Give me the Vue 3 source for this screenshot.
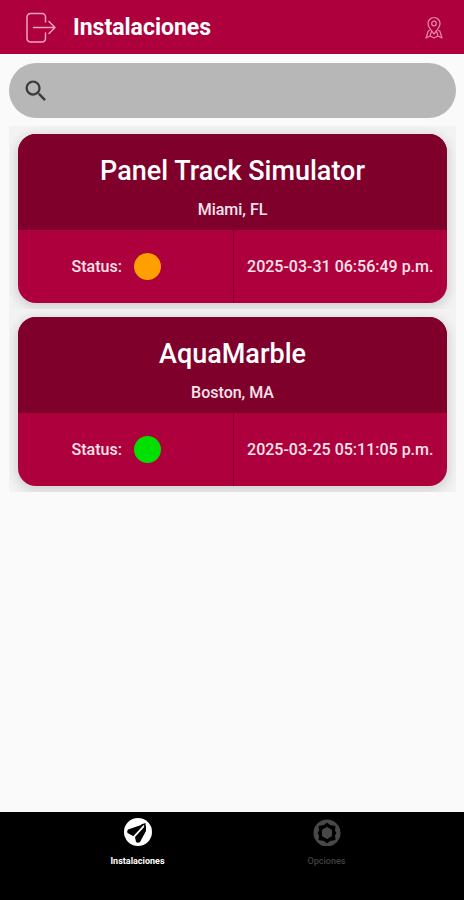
<script setup>
import { ref, computed } from 'vue'

const query = ref('')
const sites = [
  { name: 'Panel Track Simulator', place: 'Miami, FL', state: 'warning', updated: '2025-03-31 06:56:49 p.m.' },
  { name: 'AquaMarble', place: 'Boston, MA', state: 'online', updated: '2025-03-25 05:11:05 p.m.' },
]
const visibleSites = computed(() => {
  const q = query.value.trim().toLowerCase()
  return sites.filter((s) => (s.name + ' ' + s.place).toLowerCase().includes(q))
})
</script>

<template>
  <div class="screen">
    <header class="topbar">
      <button class="icon-button" type="button" aria-label="Salir">
        <svg width="32" height="32" viewBox="0 0 32 32" fill="none" stroke="#f0a3bd" stroke-width="1.5" stroke-linecap="round" stroke-linejoin="round">
          <path d="M20.500 10V5a3.500 3.500 0 0 0-3.500-3.500H5.500A3.500 3.500 0 0 0 2 5v21.500A3.500 3.500 0 0 0 5.500 30H17a3.500 3.500 0 0 0 3.500-3.500V21" />
          <path d="M8.500 15.500H30M24 9.500l6 6-6 6" />
        </svg>
      </button>
      <h1 class="heading">Instalaciones</h1>
      <button class="icon-button" type="button" aria-label="Mapa">
        <svg width="20" height="24" viewBox="0 0 20 24" fill="none" stroke="#e58aaa" stroke-width="1.200" stroke-linecap="round" stroke-linejoin="round">
          <path d="M10 18C7.500 14.500 4 11.500 4 7.500a6 6 0 0 1 12 0c0 4-3.500 7-6 10.500z" />
          <circle cx="10" cy="7.500" r="2.300" />
          <path d="M5.500 14.500 4.200 15 2 22l4-2 4 2 4-2 4 2-2.200-7-1.300-.5M6 20l1.500-4.500M14 20l-1.500-4.500" />
        </svg>
      </button>
    </header>

    <main class="content">
      <label class="search">
        <svg width="28" height="28" viewBox="0 0 24 24" fill="#3c3c3c" aria-hidden="true">
          <path d="M15.500 14h-.79l-.28-.27A6.471 6.471 0 0 0 16 9.500 6.500 6.500 0 1 0 9.500 16c1.610 0 3.090-.59 4.230-1.570l.27.28v.79l5 4.990L20.490 19l-4.990-5zm-6 0C7.010 14 5 11.990 5 9.500S7.010 5 9.500 5 14 7.010 14 9.500 11.990 14 9.500 14z" />
        </svg>
        <input v-model="query" class="search-input" type="search" aria-label="Buscar" />
      </label>

      <ul class="sites">
        <li v-for="site in visibleSites" :key="site.name" class="site">
          <article class="card">
            <div class="card-head">
              <h2 class="name">{{ site.name }}</h2>
              <p class="place">{{ site.place }}</p>
            </div>
            <div class="card-foot">
              <div class="cell status">
                <span>Status:</span>
                <span class="dot" :class="site.state"></span>
              </div>
              <time class="cell updated">{{ site.updated }}</time>
            </div>
          </article>
        </li>
      </ul>
    </main>

    <nav class="tabs">
      <a class="tab active" href="#instalaciones">
        <svg width="28" height="28" viewBox="0 0 28 28" aria-hidden="true">
          <circle cx="14" cy="14" r="14" fill="#fff" />
          <path d="M20 6 4 11.500Q2.500 13 3.500 15l6.500 3.500L21 7z" fill="#000" />
          <path d="M22 7 11 19l1 5q2 1.500 4 0L22 13z" fill="#000" />
          <path d="m17 6.500 4.500-1.500v5z" fill="#000" />
          <path d="M20 7.500 9.500 19" stroke="#fff" stroke-width="1.200" />
        </svg>
        <span>Instalaciones</span>
      </a>
      <a class="tab" href="#opciones">
        <svg width="28" height="28" viewBox="0 0 28 28" aria-hidden="true">
          <circle cx="14" cy="15" r="13.500" fill="#484848" />
          <path d="m14 4.500 3 2.500 5.500 1-.5 4.500 1.500 2.500-1.500 2.500.5 4.500-5.500 1-3 2.500-3-2.500-5.500-1 .5-4.500L4.500 15 6 12.500 5.500 8l5.500-1z" fill="#000" />
          <path d="m14 9.500 4.500 2.500v6L14 20.500 9.500 18v-6z" fill="#484848" stroke="#484848" stroke-linejoin="round" />
        </svg>
        <span>Opciones</span>
      </a>
    </nav>
  </div>
</template>

<style>
body {
  margin: 0;
  background: #fafafa;
}
</style>

<style scoped>
.screen {
  display: flex;
  flex-direction: column;
  min-height: 100vh;
  font-family: Roboto, sans-serif;
  color: #fbe3eb;
}
.topbar {
  display: flex;
  align-items: center;
  height: 54px;
  padding: 1px 20px 0 25px;
  box-sizing: border-box;
  background: #ad003c;
}
.icon-button {
  display: flex;
  padding: 0;
  border: 0;
  background: none;
  cursor: pointer;
}
.heading {
  flex: 1;
  margin: 0 0 0 16px;
  font-size: 23px;
  line-height: 28px;
  font-weight: 700;
  color: #fff;
}
.content {
  flex: 1;
  padding: 9px 8px 0 9px;
}
.search {
  display: flex;
  align-items: center;
  gap: 12px;
  height: 55px;
  padding: 0 24px 0 13px;
  box-sizing: border-box;
  border-radius: 28px;
  background: #b7b7b7;
}
.search-input {
  flex: 1;
  min-width: 0;
  padding: 0;
  border: 0;
  outline: 0;
  background: none;
  color: #3c3c3c;
  font: 400 16px/24px Roboto, sans-serif;
}
.sites {
  margin: 8px 0 0;
  padding: 0;
  list-style: none;
}
.site {
  padding: 8px 9px 6px;
  overflow: hidden;
  background: #f3f3f3;
}
.card {
  overflow: hidden;
  border-radius: 18px;
  background: #ad003c;
  box-shadow: 0 3px 12px 2px rgba(0, 0, 0, 0.14);
}
.card-head {
  padding: 20px 16px 10px;
  background: #7e002b;
  text-align: center;
}
.name {
  margin: 0;
  font-size: 27px;
  line-height: 34px;
  font-weight: 500;
  color: #fff;
}
.place {
  margin: 12px 0 0;
  font-size: 16px;
  line-height: 20px;
  font-weight: 500;
}
.card-foot {
  display: grid;
  grid-template-columns: 1fr 1fr;
  height: 73px;
  font-size: 16px;
  line-height: 20px;
  font-weight: 500;
}
.cell {
  display: flex;
  align-items: center;
  justify-content: center;
  gap: 12px;
  white-space: nowrap;
}
.status {
  padding-right: 18px;
}
.updated {
  border-left: 1px solid #7e002b;
}
.dot {
  width: 27px;
  height: 27px;
  border-radius: 50%;
}
.warning {
  background: #ff9f00;
}
.online {
  background: #00df00;
}
.tabs {
  display: grid;
  grid-template-columns: 1fr 1fr;
  height: 88px;
  padding: 6px 43px 0;
  box-sizing: border-box;
  background: #000;
}
.tab {
  display: flex;
  flex-direction: column;
  align-items: center;
  gap: 10px;
  font-size: 9px;
  line-height: 10px;
  font-weight: 500;
  color: #404040;
  text-decoration: none;
}
.tab.active {
  font-weight: 700;
  color: #fff;
}
</style>
